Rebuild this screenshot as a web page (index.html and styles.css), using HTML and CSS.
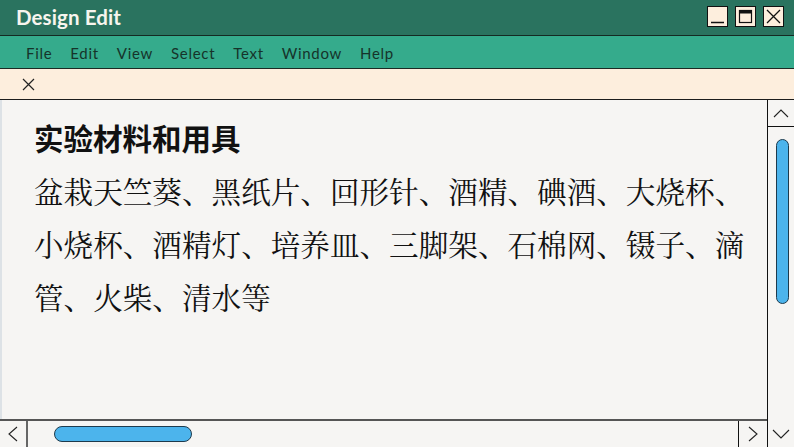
FILE: index.html
```html
<!DOCTYPE html>
<html lang="zh">
<head>
<meta charset="utf-8">
<title>Design Edit</title>
<link rel="stylesheet" href="styles.css">
</head>
<body>
<div class="window">
  <header class="titlebar">
    <span class="title">Design Edit</span>
    <div class="winbtns">
      <span class="winbtn"><svg width="21" height="21" viewBox="0 0 21 21"><line x1="4" y1="16.5" x2="17" y2="16.5" stroke="#111" stroke-width="1.5"/></svg></span>
      <span class="winbtn"><svg width="21" height="21" viewBox="0 0 21 21"><rect x="4.5" y="4.5" width="12" height="12" fill="none" stroke="#111" stroke-width="1.2"/><rect x="4.5" y="4.5" width="12" height="3" fill="#111"/></svg></span>
      <span class="winbtn"><svg width="21" height="21" viewBox="0 0 21 21"><path d="M4 4 L17 17 M17 4 L4 17" stroke="#111" stroke-width="1.3" fill="none"/></svg></span>
    </div>
  </header>
  <nav class="menubar">
    <span class="menu-item">File</span>
    <span class="menu-item">Edit</span>
    <span class="menu-item">View</span>
    <span class="menu-item">Select</span>
    <span class="menu-item">Text</span>
    <span class="menu-item">Window</span>
    <span class="menu-item">Help</span>
  </nav>
  <div class="toolbar">
    <svg class="tb-close" width="13" height="13" viewBox="0 0 13 13"><path d="M1 1 L12 12 M12 1 L1 12" stroke="#222" stroke-width="1.2" fill="none"/></svg>
  </div>
  <div class="body">
    <div class="leftcol">
      <main class="content">
        <h1 class="heading">实验材料和用具</h1>
        <p class="text">盆栽天竺葵、黑纸片、回形针、酒精、碘酒、大烧杯、小烧杯、酒精灯、培养皿、三脚架、石棉网、镊子、滴管、火柴、清水等</p>
      </main>
      <div class="hscroll">
        <span class="hbtn hbtn-left"><svg width="12" height="16" viewBox="0 0 12 16"><path d="M10 1 L2 8 L10 15" stroke="#222" stroke-width="1.1" fill="none"/></svg></span>
        <div class="htrack"><span class="hthumb"></span></div>
        <span class="hbtn hbtn-right"><svg width="12" height="16" viewBox="0 0 12 16"><path d="M2 1 L10 8 L2 15" stroke="#222" stroke-width="1.1" fill="none"/></svg></span>
      </div>
    </div>
    <aside class="vscroll">
      <span class="vbtn vbtn-up"><svg width="16" height="10" viewBox="0 0 16 10"><path d="M1 9 L8 2 L15 9" stroke="#222" stroke-width="1.1" fill="none"/></svg></span>
      <div class="vtrack"><span class="vthumb"></span></div>
      <span class="vbtn vbtn-down"><svg width="18" height="10" viewBox="0 0 18 10"><path d="M1 1 L9 9 L17 1" stroke="#222" stroke-width="1.1" fill="none"/></svg></span>
    </aside>
  </div>
</div>
</body>
</html>
```

FILE: styles.css
```css
* { box-sizing: border-box; }
html, body { margin: 0; padding: 0; }
body {
  width: 794px;
  height: 447px;
  overflow: hidden;
  background: #f6f5f3;
  font-family: Lato, "Noto Sans", sans-serif;
}
.window {
  width: 794px;
  height: 447px;
  display: flex;
  flex-direction: column;
}
.titlebar {
  height: 36px;
  background: #2a735f;
  border-bottom: 1px solid #152a22;
  display: flex;
  align-items: center;
  justify-content: space-between;
  padding: 0 10px 0 16px;
  flex: none;
}
.title {
  color: #f7f5ee;
  font-weight: 700;
  font-size: 20.5px;
  letter-spacing: 0.1px;
  margin-top: -1px;
}
.winbtns {
  display: flex;
  gap: 7px;
  margin-top: -3px;
}
.winbtn {
  width: 21px;
  height: 21px;
  background: #fdeedd;
  border: 1px solid #111;
  display: flex;
  align-items: center;
  justify-content: center;
}
.winbtn svg { display: block; flex: none; }
.menubar {
  height: 33px;
  background: #35ab8c;
  border-bottom: 1px solid #1c2a24;
  display: flex;
  align-items: center;
  padding-left: 26px;
  flex: none;
}
.menu-item {
  font-size: 15px;
  letter-spacing: 0.7px;
  color: #16332a;
  margin-right: 18px;
  margin-top: 1px;
}
.toolbar {
  height: 31px;
  background: #fdeedd;
  border-bottom: 1px solid #1c1c1c;
  display: flex;
  align-items: center;
  padding-left: 22px;
  flex: none;
}
.tb-close { display: block; }
.body {
  flex: 1;
  display: flex;
  min-height: 0;
}
.leftcol {
  flex: 1;
  display: flex;
  flex-direction: column;
  min-width: 0;
}
.content {
  flex: 1;
  background: #f6f5f3;
  border-left: 2px solid #dde2e6;
  padding: 11px 20px 0 32px;
}
.heading {
  margin: 0;
  font-family: "Noto Sans CJK SC", sans-serif;
  font-weight: 700;
  font-size: 29.5px;
  line-height: 53px;
  color: #111;
}
.text {
  margin: 0;
  font-family: "Noto Serif CJK SC", "Noto Sans CJK SC", serif;
  font-weight: 400;
  font-size: 29.6px;
  line-height: 53px;
  color: #111;
}
.hscroll {
  height: 28px;
  border-top: 2px solid #555;
  display: flex;
  flex: none;
  background: #f6f5f3;
}
.hbtn {
  display: flex;
  align-items: center;
  justify-content: center;
}
.hbtn svg { display: block; }
.hbtn-left {
  width: 28px;
  border-right: 2px solid #666;
}
.hbtn-right {
  width: 29px;
  border-left: 1px solid #111;
}
.htrack {
  flex: 1;
  display: flex;
  align-items: center;
  padding-left: 26px;
}
.hthumb {
  width: 138px;
  height: 16px;
  background: #4cb4ec;
  border: 1px solid #1e3b4d;
  border-radius: 8px;
}
.vscroll {
  width: 27px;
  border-left: 1px solid #111;
  display: flex;
  flex-direction: column;
  flex: none;
  background: #f6f5f3;
}
.vbtn {
  display: flex;
  align-items: center;
  justify-content: center;
  flex: none;
}
.vbtn svg { display: block; }
.vbtn-up {
  height: 27px;
  border-bottom: 1px solid #111;
}
.vbtn-down {
  height: 28px;
  padding-top: 2px;
}
.vtrack {
  flex: 1;
  padding: 12px 0 0 8px;
}
.vthumb {
  display: block;
  width: 13px;
  height: 165px;
  background: #4cb4ec;
  border: 1px solid #1e3b4d;
  border-radius: 7px;
}
```
